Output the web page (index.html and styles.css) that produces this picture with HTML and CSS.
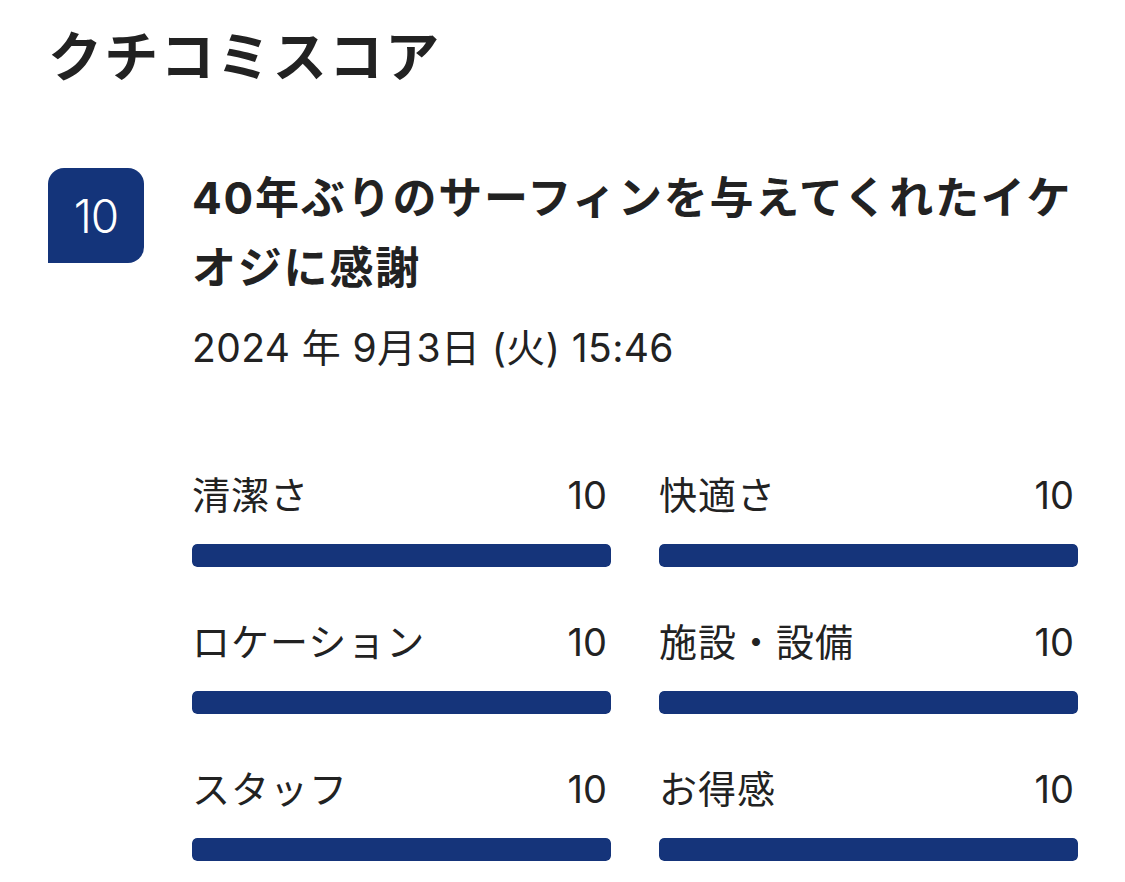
FILE: index.html
```html
<!DOCTYPE html>
<html lang="ja">
<head>
<meta charset="utf-8">
<title>クチコミスコア</title>
<link rel="stylesheet" href="styles.css">
</head>
<body>
<main class="page">
  <h1 class="title">クチコミスコア</h1>
  <section class="review">
    <div class="badge">10</div>
    <div class="review-body">
      <h2 class="headline">40年ぶりのサーフィンを与えてくれたイケオジに感謝</h2>
      <p class="date">2024 年 9月3日 (火) 15:46</p>
      <div class="scores">
        <div class="score">
          <div class="score-head"><span class="label">清潔さ</span><span class="value">10</span></div>
          <div class="track"><div class="fill" style="width:100%"></div></div>
        </div>
        <div class="score">
          <div class="score-head"><span class="label">快適さ</span><span class="value">10</span></div>
          <div class="track"><div class="fill" style="width:100%"></div></div>
        </div>
        <div class="score">
          <div class="score-head"><span class="label">ロケーション</span><span class="value">10</span></div>
          <div class="track"><div class="fill" style="width:100%"></div></div>
        </div>
        <div class="score">
          <div class="score-head"><span class="label">施設・設備</span><span class="value">10</span></div>
          <div class="track"><div class="fill" style="width:100%"></div></div>
        </div>
        <div class="score">
          <div class="score-head"><span class="label">スタッフ</span><span class="value">10</span></div>
          <div class="track"><div class="fill" style="width:100%"></div></div>
        </div>
        <div class="score">
          <div class="score-head"><span class="label">お得感</span><span class="value">10</span></div>
          <div class="track"><div class="fill" style="width:100%"></div></div>
        </div>
      </div>
    </div>
  </section>
</main>
</body>
</html>
```

FILE: styles.css
```css
* { box-sizing: border-box; }
html, body {
  margin: 0;
  padding: 0;
  background: #ffffff;
}
body {
  font-family: Inter, "Noto Sans CJK JP", "Noto Sans", sans-serif;
  color: #222222;
}
.page {
  padding: 22px 47px 0 48px;
}
.title {
  margin: 0;
  font-size: 54px;
  line-height: 72px;
  font-weight: 700;
  color: #222222;
  letter-spacing: 2.2px;
}
.review {
  display: flex;
  align-items: flex-start;
  margin-top: 74px;
  gap: 48px;
}
.badge {
  flex: 0 0 96px;
  width: 96px;
  height: 95px;
  background: #14347a;
  color: #ffffff;
  border-radius: 16px 16px 16px 0;
  display: flex;
  align-items: center;
  justify-content: center;
  font-size: 46px;
  font-weight: 300;
  letter-spacing: -1px;
}
.review-body {
  flex: 1;
  min-width: 0;
}
.headline {
  margin: -5px 0 0 0;
  font-size: 44px;
  line-height: 70px;
  font-weight: 700;
  letter-spacing: 1.8px;
  color: #222222;
}
.date {
  margin: 20px 0 0 0;
  font-size: 39px;
  line-height: 50px;
  font-weight: 400;
  letter-spacing: 0.4px;
  color: #222222;
}
.scores {
  margin-top: 94px;
  display: grid;
  grid-template-columns: 1fr 1fr;
  column-gap: 48px;
  row-gap: 47px;
}
.score-head {
  display: flex;
  justify-content: space-between;
  align-items: center;
  height: 56px;
  font-size: 38px;
  line-height: 56px;
}
.label {
  letter-spacing: 1px;
}
.value {
  padding-right: 4px;
}
.track {
  margin-top: 21px;
  height: 23px;
  border-radius: 5px;
  background: #e4e8f0;
  overflow: hidden;
}
.fill {
  height: 100%;
  background: #15347a;
  border-radius: 5px;
}
```
